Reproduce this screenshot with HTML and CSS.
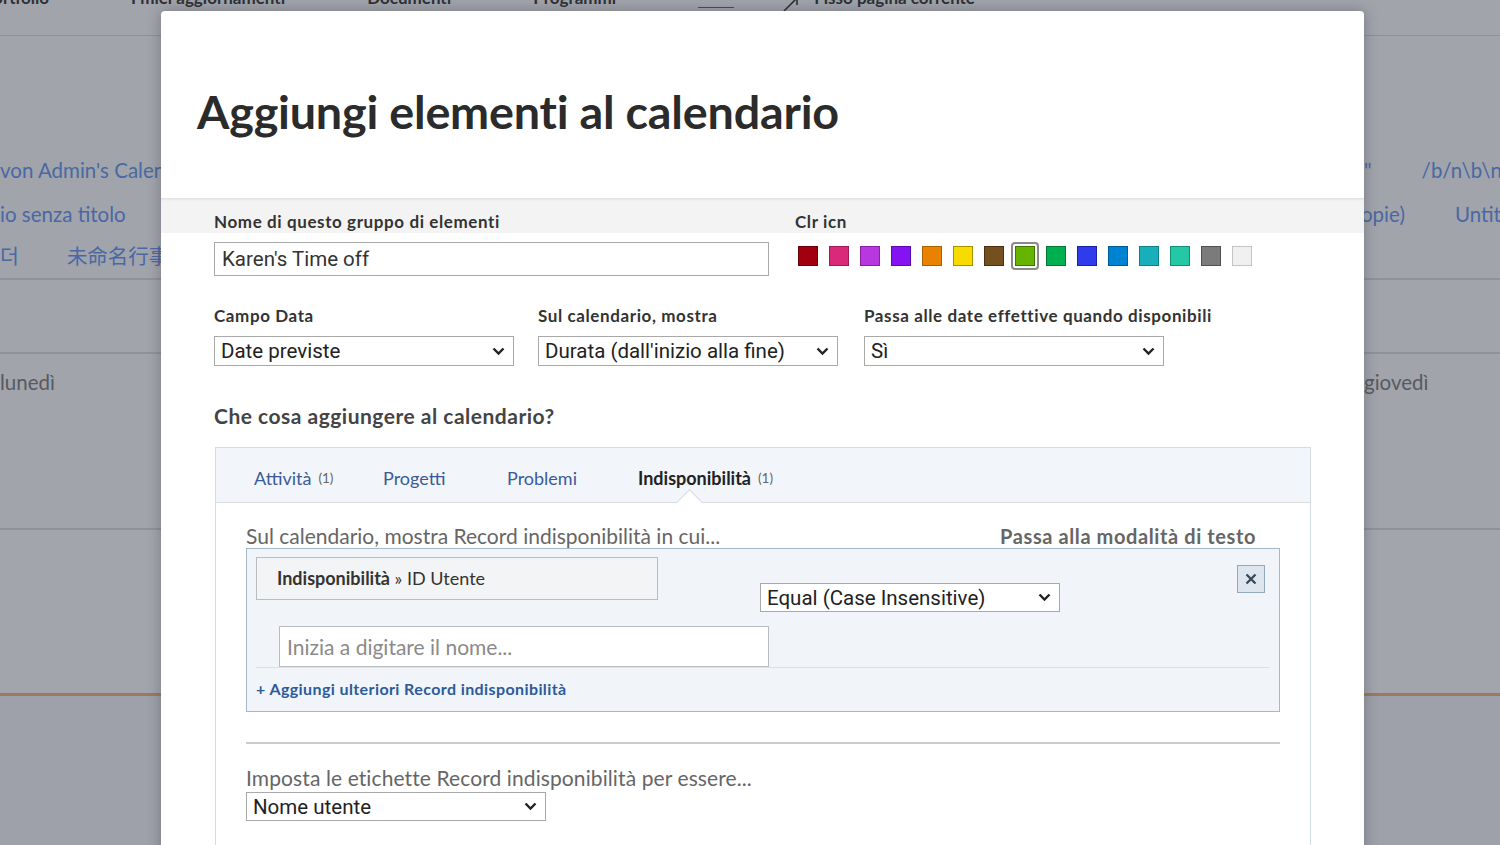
FILE: index.html
```html
<!DOCTYPE html>
<html lang="it">
<head>
<meta charset="utf-8">
<title>Aggiungi elementi al calendario</title>
<link rel="stylesheet" href="styles.css">
</head>
<body>
<div class="page">
  <div class="nav">
    <span class="nav-item first">Portfolio</span>
    <span class="nav-item">I miei aggiornamenti</span>
    <span class="nav-item">Documenti</span>
    <span class="nav-item">Programmi</span>
    <span class="nav-dash"></span>
    <span class="nav-pin">
      <svg class="pin-ico" width="20" height="16" viewBox="0 0 20 16"><path d="M2 15 L15 2 M8 2 H15 V9" fill="none" stroke="#2e3034" stroke-width="1.6"/></svg>
      <span class="nav-item">Fisso pagina corrente</span>
    </span>
  </div>
  <div class="cal-top">
    <div class="bg-row h44"><span class="bg-left"><span class="lnk">von Admin's Calendar</span></span><span class="bg-right"><span class="lnk">"</span><span class="lnk">/b/n\b\n-</span></span></div>
    <div class="bg-row h44"><span class="bg-left"><span class="lnk">io senza titolo</span></span><span class="bg-right"><span class="lnk tight">opie)</span><span class="lnk">Untitled</span></span></div>
    <div class="bg-row h38"><span class="bg-left"><span class="lnk">더</span><span class="lnk">未命名行事曆</span></span><span class="bg-right"></span></div>
  </div>
  <div class="cal-mid"></div>
  <div class="cal-days">
    <div class="bg-row h56"><span class="bg-left"><span class="day">lunedì</span></span><span class="bg-right"><span class="day">giovedì</span></span></div>
  </div>
  <div class="cal-week"></div>
  <div class="cal-rest"></div>
</div>

<div class="modal">
  <div class="modal-header">
    <h1 class="title">Aggiungi elementi al calendario</h1>
  </div>

  <div class="band">
    <div class="band-label w-name">Nome di questo gruppo di elementi</div>
    <div class="band-label">Clr icn</div>
  </div>

  <div class="row1">
    <div class="text-input w-name">Karen's Time off</div>
    <div class="swatches">
      <span class="sw" style="background:#a3000f;border-color:#6a0008"></span>
      <span class="sw" style="background:#d82a78;border-color:#a01a58"></span>
      <span class="sw" style="background:#b838e0;border-color:#8a20a8"></span>
      <span class="sw" style="background:#8412f2;border-color:#5a0ab0"></span>
      <span class="sw" style="background:#e88200;border-color:#b06000"></span>
      <span class="sw" style="background:#f8dc00;border-color:#a89000"></span>
      <span class="sw" style="background:#74501e;border-color:#4a3010"></span>
      <span class="sw selected" style="background:#66b400;border-color:#3d7a00"></span>
      <span class="sw" style="background:#00b04e;border-color:#007a34"></span>
      <span class="sw" style="background:#2f3cec;border-color:#1a24a0"></span>
      <span class="sw" style="background:#0082d2;border-color:#005a96"></span>
      <span class="sw" style="background:#18afba;border-color:#0d8088"></span>
      <span class="sw" style="background:#24c8a4;border-color:#149078"></span>
      <span class="sw" style="background:#7b7b7b;border-color:#505050"></span>
      <span class="sw" style="background:#f0f0f0;border-color:#c4c4c4"></span>
    </div>
  </div>

  <div class="row2">
    <div class="field">
      <div class="label">Campo Data</div>
      <div class="select w300"><span>Date previste</span><svg class="chev" width="13" height="9" viewBox="0 0 13 9"><path d="M1.5 1.5 L6.5 6.5 L11.5 1.5" fill="none" stroke="#222" stroke-width="2.4"/></svg></div>
    </div>
    <div class="field">
      <div class="label">Sul calendario, mostra</div>
      <div class="select w300"><span>Durata (dall'inizio alla fine)</span><svg class="chev" width="13" height="9" viewBox="0 0 13 9"><path d="M1.5 1.5 L6.5 6.5 L11.5 1.5" fill="none" stroke="#222" stroke-width="2.4"/></svg></div>
    </div>
    <div class="field third">
      <div class="label">Passa alle date effettive quando disponibili</div>
      <div class="select w300"><span>Sì</span><svg class="chev" width="13" height="9" viewBox="0 0 13 9"><path d="M1.5 1.5 L6.5 6.5 L11.5 1.5" fill="none" stroke="#222" stroke-width="2.4"/></svg></div>
    </div>
  </div>

  <h2 class="section-title">Che cosa aggiungere al calendario?</h2>

  <div class="panel">
    <div class="tabs">
      <div class="tab t1"><span class="tab-name">Attività</span><span class="count">(1)</span></div>
      <div class="tab t2"><span class="tab-name">Progetti</span></div>
      <div class="tab t3"><span class="tab-name">Problemi</span></div>
      <div class="tab active"><span class="tab-name">Indisponibilità</span><span class="count">(1)</span></div>
    </div>
    <div class="panel-body">
      <div class="filter-head">
        <span class="muted">Sul calendario, mostra Record indisponibilità in cui...</span>
        <span class="text-mode">Passa alla modalità di testo</span>
      </div>
      <div class="filter-box">
        <div class="cond-row">
          <div class="field-path"><b>Indisponibilità</b> » ID Utente</div>
          <div class="select w300 op"><span>Equal (Case Insensitive)</span><svg class="chev" width="13" height="9" viewBox="0 0 13 9"><path d="M1.5 1.5 L6.5 6.5 L11.5 1.5" fill="none" stroke="#222" stroke-width="2.4"/></svg></div>
          <div class="close-btn"><svg width="12" height="12" viewBox="0 0 12 12"><path d="M1.5 1.5 L10.5 10.5 M10.5 1.5 L1.5 10.5" fill="none" stroke="#3a4856" stroke-width="2.3"/></svg></div>
        </div>
        <div class="value-row">
          <div class="name-input">Inizia a digitare il nome...</div>
        </div>
        <div class="add-more">+ Aggiungi ulteriori Record indisponibilità</div>
      </div>
      <div class="rule"></div>
      <div class="muted label-line">Imposta le etichette Record indisponibilità per essere...</div>
      <div class="select w300 small"><span>Nome utente</span><svg class="chev" width="13" height="9" viewBox="0 0 13 9"><path d="M1.5 1.5 L6.5 6.5 L11.5 1.5" fill="none" stroke="#222" stroke-width="2.4"/></svg></div>
    </div>
  </div>
</div>
</body>
</html>
```

FILE: styles.css
```css
* { box-sizing: border-box; }

html, body {
  margin: 0;
  padding: 0;
}

body {
  width: 1500px;
  height: 845px;
  overflow: hidden;
  position: relative;
  background: #a1a4ab;
  font-family: Lato, "Noto Sans CJK SC", sans-serif;
  color: #333;
}

/* ---------- dimmed background page ---------- */
.page {
  display: flex;
  flex-direction: column;
  width: 1500px;
}

.nav {
  height: 36px;
  border-bottom: 1px solid #8c9097;
  display: flex;
  align-items: flex-start;
  overflow: hidden;
}

.nav-item {
  font-size: 17px;
  font-weight: 700;
  color: #2e3034;
  line-height: 20px;
  margin-top: -12px;
  margin-right: 82px;
  white-space: nowrap;
}

.nav-item.first {
  margin-left: -17px;
}

.nav-dash {
  width: 36px;
  height: 1px;
  background: #4a4d52;
  margin-top: 7px;
  margin-right: 48px;
}

.nav-pin {
  display: flex;
  align-items: flex-start;
  gap: 12px;
}

.pin-ico {
  margin-top: -4px;
}

.nav-pin .nav-item {
  margin-right: 0;
}

.cal-top {
  height: 244px;
  padding-top: 112px;
  border-bottom: 2px solid #8e9299;
}

.bg-row {
  display: grid;
  grid-template-columns: 1362px 1fr;
  align-items: center;
  white-space: nowrap;
  overflow: hidden;
}

.h44 { height: 44px; }
.h38 { height: 38px; }
.h56 { height: 56px; }

.bg-left, .bg-right {
  display: flex;
  gap: 48px;
  overflow: hidden;
  font-size: 20.5px;
}

.bg-right { gap: 50px; padding-left: 2px; }

.lnk { color: #4a68a4; }
.lnk.tight { margin-left: -3px; }

.day { color: #575a60; }

.cal-mid {
  height: 74px;
  border-bottom: 2px solid #8e9299;
}

.cal-days {
  height: 176px;
  border-bottom: 2px solid #8e9299;
}

.cal-week {
  height: 166px;
  background: #a2a5ac;
  border-bottom: 3px solid #9a7b5c;
}

.cal-rest {
  height: 160px;
  background: #9ea1a9;
}

/* ---------- modal ---------- */
.modal {
  position: absolute;
  left: 161px;
  top: 11px;
  width: 1203px;
  height: 900px;
  background: #fff;
  border-radius: 4px 4px 0 0;
  box-shadow: 0 0 14px rgba(40, 44, 52, 0.35);
}

.modal-header {
  height: 187px;
  padding: 72px 0 0 36px;
}

.title {
  margin: 0;
  font-family: Lato, sans-serif;
  font-size: 46.7px;
  font-weight: 700;
  line-height: 56px;
  color: #2b2b2b;
  letter-spacing: -0.2px;
}

.band {
  height: 35px;
  background: #f3f3f3;
  box-shadow: inset 0 3px 3px -2px rgba(0, 0, 0, 0.10);
  display: flex;
  align-items: center;
  padding: 13px 0 0 53px;
  gap: 26px;
}

.band-label, .label {
  font-size: 17px;
  font-weight: 700;
  letter-spacing: 0.6px;
  color: #333;
  line-height: 20px;
  white-space: nowrap;
}

.w-name { width: 555px; flex: none; }

.row1 {
  display: flex;
  gap: 26px;
  padding: 9px 0 0 53px;
  align-items: flex-start;
}

.text-input {
  height: 34px;
  border: 1px solid #a9a9a9;
  padding-left: 7px;
  font-family: Roboto, sans-serif;
  font-size: 20.5px;
  line-height: 32px;
  color: #333;
}

.swatches {
  display: flex;
  gap: 11px;
  margin: 4px 0 0 3px;
}

.sw {
  width: 20px;
  height: 20px;
  border: 1px solid;
  position: relative;
  display: block;
}

.sw.selected::after {
  content: "";
  position: absolute;
  inset: -5px;
  border: 2px solid #8a8a8a;
  border-radius: 4px;
}

.row2 {
  display: flex;
  gap: 24px;
  padding: 30px 0 0 53px;
}

.field.third { margin-left: 2px; }

.field .label {
  margin-bottom: 10px;
}

.select {
  height: 30px;
  border: 1px solid #a9a9a9;
  background: #fff;
  display: flex;
  align-items: center;
  justify-content: space-between;
  padding: 0 8px 0 6px;
  font-family: Roboto, sans-serif;
  font-size: 20.5px;
  color: #222;
  white-space: nowrap;
}

.w300 { width: 300px; flex: none; }

.chev { flex: none; }

.section-title {
  margin: 38px 0 0 53px;
  font-size: 21px;
  font-weight: 700;
  letter-spacing: 0.5px;
  line-height: 24px;
  color: #444;
}

.panel {
  margin: 19px 0 0 54px;
  width: 1096px;
  height: 420px;
  border: 1px solid #d6dce3;
  border-bottom: none;
}

.tabs {
  height: 55px;
  background: #f2f5f9;
  border-bottom: 1px solid #d6dce3;
  display: flex;
  align-items: stretch;
  padding-left: 38px;
}

.tab {
  display: flex;
  align-items: center;
  gap: 7px;
  position: relative;
  padding-top: 5px;
  font-size: 18px;
  color: #3a5a9a;
  flex: none;
}

.tab.t1 { width: 129px; }
.tab.t2 { width: 124px; }
.tab.t3 { width: 131px; }

.tab .count {
  font-size: 13.5px;
  color: #666;
}

.tab.active .tab-name {
  font-weight: 700;
  color: #222;
}

.tab.active::after {
  content: "";
  position: absolute;
  left: 42px;
  bottom: -10px;
  width: 18px;
  height: 18px;
  background: #fff;
  border-top: 1px solid #d6dce3;
  border-left: 1px solid #d6dce3;
  transform: rotate(45deg);
}

.panel-body {
  padding: 0 30px;
}

.filter-head {
  height: 45px;
  padding: 21px 24px 0 0;
  display: flex;
  justify-content: space-between;
  align-items: baseline;
  line-height: 24px;
}

.muted {
  font-size: 21px;
  color: #666;
  white-space: nowrap;
}

.text-mode {
  font-size: 20px;
  font-weight: 700;
  letter-spacing: 0.6px;
  color: #666;
  white-space: nowrap;
}

.filter-box {
  border: 1px solid #a6b8c8;
  background: #f1f5f9;
  height: 164px;
}

.cond-row {
  display: flex;
  align-items: flex-start;
  padding: 8px 14px 0 9px;
}

.field-path {
  width: 402px;
  height: 43px;
  border: 1px solid #b9bdc2;
  background: #f3f4f5;
  padding-left: 20px;
  line-height: 41px;
  font-size: 18px;
  color: #333;
}

.field-path b { font-weight: 700; }

.select.op {
  margin: 26px 0 0 102px;
  height: 29px;
}

.close-btn {
  margin: 8px 0 0 auto;
  width: 28px;
  height: 28px;
  border: 1px solid #93a8bb;
  background: #dde5ee;
  display: flex;
  align-items: center;
  justify-content: center;
}

.value-row {
  margin: 14px 10px 0 9px;
  padding-left: 23px;
  border-bottom: 1px solid #d9e0e8;
}

.name-input {
  width: 490px;
  height: 41px;
  border: 1px solid #b9bdc2;
  background: #fff;
  padding-left: 7px;
  font-size: 21px;
  line-height: 39px;
  color: #8a8a8a;
}

.add-more {
  padding: 11px 0 0 9px;
  font-size: 16px;
  font-weight: 700;
  letter-spacing: 0.4px;
  color: #2b5b9b;
  line-height: 20px;
}

.rule {
  margin-top: 30px;
  height: 2px;
  background: #cbcbcb;
}

.label-line {
  margin-top: 22px;
  line-height: 24px;
  letter-spacing: 0.1px;
}

.select.small {
  height: 29px;
  margin-top: 2px;
}
```
